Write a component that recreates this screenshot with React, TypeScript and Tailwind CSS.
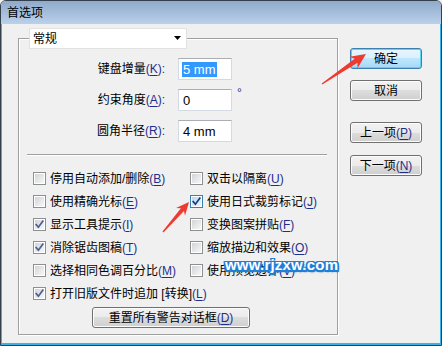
import React from "react";

function Key({ k }: { k: string }) {
  return (
    <span className="text-[#1d2f8a]">
      (<span className="underline underline-offset-[2px]">{k}</span>)
    </span>
  );
}

function Box({ checked, hot }: { checked?: boolean; hot?: boolean }) {
  return (
    <span
      className={
        "w-[13px] h-[13px] shrink-0 border p-[1px] flex bg-white " +
        (hot ? "border-[#3c7fb1]" : "border-[#8e8f8f]")
      }
    >
      <span
        className={
          "flex-1 relative bg-gradient-to-br " +
          (hot ? "from-[#b6d8f2] to-[#eef7fd]" : "from-[#d2d4d8] to-[#f7f7f7]")
        }
      >
        {checked && (
          <svg
            width="13"
            height="13"
            viewBox="0 0 13 13"
            className="absolute left-[-2px] top-[-2px]"
          >
            <path
              d="M3.2 6.6 L5.4 9.2 L9.8 3.2"
              fill="none"
              stroke={hot ? "#1f3b7a" : "#4b5f8f"}
              strokeWidth="1.7"
              strokeLinecap="square"
            />
          </svg>
        )}
      </span>
    </span>
  );
}

function Check({
  label,
  k,
  checked,
  hot,
  span,
}: {
  label: React.ReactNode;
  k: string;
  checked?: boolean;
  hot?: boolean;
  span?: boolean;
}) {
  return (
    <div className={"flex items-center h-[23px] gap-[4px] " + (span ? "col-span-2" : "")}>
      <Box checked={checked} hot={hot} />
      <span className="text-[12px] leading-[14px] whitespace-nowrap text-black">
        {label}
        <Key k={k} />
      </span>
    </div>
  );
}

function Field({
  label,
  k,
  value,
  selected,
  suffix,
}: {
  label: string;
  k: string;
  value: string;
  selected?: boolean;
  suffix?: React.ReactNode;
}) {
  return (
    <div className="flex items-center h-[22px]">
      <div className="w-[146px] text-right text-[12px] leading-[14px] text-black whitespace-nowrap">
        {label}
        <Key k={k} />
        <span className="text-[#1d2f8a]">:</span>
      </div>
      <div className="ml-[13px] w-[54px] h-[22px] bg-white border border-[#d3dae3] border-t-[#abadb3] flex items-center pl-[3px] text-[13px] text-black">
        {selected ? (
          <span className="bg-[#3399ff] text-white px-[1px] leading-[15px]">{value}</span>
        ) : (
          <span className="px-[1px] leading-[15px]">{value}</span>
        )}
      </div>
      {suffix}
    </div>
  );
}

function Btn({
  children,
  def,
  className,
}: {
  children: React.ReactNode;
  def?: boolean;
  className?: string;
}) {
  return (
    <div
      className={
        "w-[72px] h-[21px] rounded-[3px] border flex items-center justify-center text-[12px] leading-[14px] text-black whitespace-nowrap " +
        (def
          ? "border-[#3c7fb1] shadow-[inset_0_0_0_1px_#5fd3f7] bg-[linear-gradient(#eaf6fd_0%,#d9f0fc_50%,#bee6fd_50%,#a7d9f5_100%)] "
          : "border-[#707070] shadow-[inset_0_0_0_1px_#fcfcfc] bg-[linear-gradient(#f2f2f2_0%,#ebebeb_50%,#dddddd_50%,#cfcfcf_100%)] ") +
        (className || "")
      }
    >
      {children}
    </div>
  );
}

function arrowPts(
  tx: number,
  ty: number,
  px: number,
  py: number,
  headLen: number,
  headW: number,
  neckW: number,
  tailW: number
) {
  const dx = px - tx;
  const dy = py - ty;
  const L = Math.hypot(dx, dy);
  const ux = dx / L;
  const uy = dy / L;
  const nx = -uy;
  const ny = ux;
  const bx = px - ux * headLen;
  const by = py - uy * headLen;
  const cx = px - ux * (headLen - 3);
  const cy = py - uy * (headLen - 3);
  const pts = [
    [tx + (nx * tailW) / 2, ty + (ny * tailW) / 2],
    [cx + (nx * neckW) / 2, cy + (ny * neckW) / 2],
    [bx + (nx * headW) / 2, by + (ny * headW) / 2],
    [px, py],
    [bx - (nx * headW) / 2, by - (ny * headW) / 2],
    [cx - (nx * neckW) / 2, cy - (ny * neckW) / 2],
    [tx - (nx * tailW) / 2, ty - (ny * tailW) / 2],
  ];
  return pts.map((p) => p[0].toFixed(1) + "," + p[1].toFixed(1)).join(" ");
}

export default function App() {
  return (
    <div className="w-[442px] h-[346px] relative overflow-hidden bg-[#f0f0f0] font-['Liberation_Sans','Noto_Sans_CJK_SC',sans-serif]">
      <div className="w-full h-full flex flex-col border border-[#34404c] rounded-t-[6px] overflow-hidden">
        {/* title bar */}
        <div className="h-[23px] shrink-0 flex items-center pl-[6px] bg-gradient-to-b from-[#90aacb] to-[#bad1ea] text-[12px] leading-[14px] text-black">
          首选项
        </div>
        {/* body */}
        <div className="flex-1 flex bg-[#f0f0f0] border-l border-r border-b-2 border-[#3cb2e6] pl-[16px] pt-[14px]">
          {/* group box */}
          <div className="relative w-[320px] h-[297px] border border-[#a0a0a0] shadow-[inset_1px_1px_0_#ffffff,1px_1px_0_#ffffff] flex flex-col">
            <div className="absolute left-[10px] top-[-11px] w-[158px] h-[21px] bg-white border border-[#e2e2e2] flex items-center justify-between pl-[3px] pr-[4px] text-[12px] leading-[14px] text-black">
              <span>常规</span>
              <svg width="8" height="5" viewBox="0 0 8 5">
                <path d="M0 0 H7 L3.5 4 Z" fill="#000" />
              </svg>
            </div>

            <div className="flex flex-col gap-[9px] pt-[19px]">
              <Field label="键盘增量" k="K" value="5 mm" selected />
              <Field
                label="约束角度"
                k="A"
                value="0"
                suffix={
                  <span className="ml-[5px] self-start mt-[-3px] text-[12px] leading-[14px] text-[#1d2f8a]">
                    °
                  </span>
                }
              />
              <Field label="圆角半径" k="R" value="4 mm" />
            </div>

            <div className="mt-[12px] ml-[8px] w-[300px] h-[2px] border-t border-[#a0a0a0] border-b border-b-white" />

            <div className="mt-[11px] pl-[14px] grid grid-cols-[157px_1fr]">
              <Check label="停用自动添加/删除" k="B" />
              <Check label="双击以隔离" k="U" />
              <Check label="使用精确光标" k="E" />
              <Check label="使用日式裁剪标记" k="J" checked hot />
              <Check label="显示工具提示" k="I" checked />
              <Check label="变换图案拼贴" k="F" />
              <Check label="消除锯齿图稿" k="T" checked />
              <Check label="缩放描边和效果" k="O" />
              <Check label="选择相同色调百分比" k="M" />
              <Check label="使用预览边界" k="V" />
              <Check label="打开旧版文件时追加 [转换]" k="L" checked span />
            </div>

            <div className="mt-[2px] ml-[73px] w-[158px] h-[21px] rounded-[3px] border border-[#707070] shadow-[inset_0_0_0_1px_#fcfcfc] bg-[linear-gradient(#f2f2f2_0%,#ebebeb_50%,#dddddd_50%,#cfcfcf_100%)] flex items-center justify-center text-[12px] leading-[14px] text-black">
              重置所有警告对话框
              <Key k="D" />
            </div>
          </div>

          {/* buttons */}
          <div className="ml-[12px] pt-[10px] flex flex-col">
            <Btn def>确定</Btn>
            <Btn className="mt-[11px]">取消</Btn>
            <Btn className="mt-[21px]">
              上一项
              <Key k="P" />
            </Btn>
            <Btn className="mt-[12px]">
              下一项
              <Key k="N" />
            </Btn>
          </div>
        </div>
      </div>

      {/* watermark */}
      <div className="absolute left-[225px] top-[256px] text-[15px] leading-[18px] font-bold text-white tracking-[0.2px] [text-shadow:-1.5px_-1.5px_0_#1f7fd6,1.5px_-1.5px_0_#1f7fd6,-1.5px_1.5px_0_#1f7fd6,1.5px_1.5px_0_#1f7fd6,0_-1.5px_0_#1f7fd6,0_1.5px_0_#1f7fd6,-1.5px_0_0_#1f7fd6,1.5px_0_0_#1f7fd6,1px_2px_2px_#0b5aa8]">
        www.rjzxw.com
      </div>

      {/* red arrows */}
      <svg
        className="absolute inset-0 pointer-events-none"
        width="442"
        height="346"
        viewBox="0 0 442 346"
      >
        <polygon points={arrowPts(322, 84, 366, 54, 15, 14, 5, 1.2)} fill="#ee3a2f" />
        <polygon points={arrowPts(163, 232, 189, 202, 13, 12, 4, 1.2)} fill="#ee3a2f" />
      </svg>
    </div>
  );
}
